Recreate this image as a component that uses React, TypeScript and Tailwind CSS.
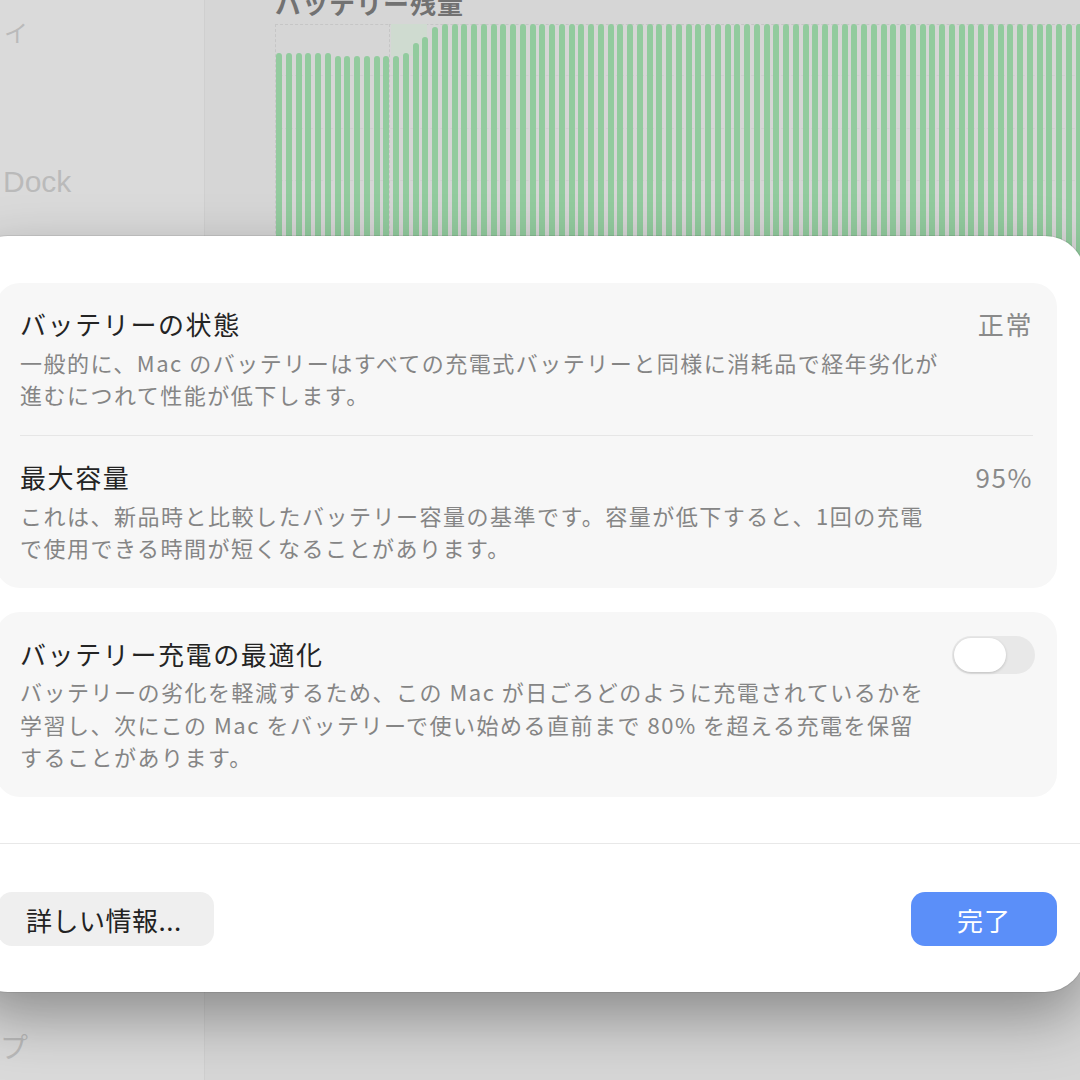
import React from "react";

const bars: number[] = [
  211, 211, 211, 211, 211, 211,
  208, 208, 208, 208, 208, 208, 208,
  211, 221, 227, 237,
  ...Array.from({ length: 66 }, () => 240),
];

const Row = ({
  title,
  value,
  lines,
  last,
}: {
  title: string;
  value: string;
  lines: string[];
  last?: boolean;
}) => {
  return (
    <div
      className={`flex justify-between pt-[25px] pb-[25px] ${
        last ? "" : "border-b border-[#e6e6e6]"
      }`}
    >
      <div>
        <div className="text-[26px] leading-[32px] tracking-[1.6px] text-[#242424]">
          {title}
        </div>
        <div className="mt-[6px] text-[22px] leading-[32px] tracking-[1.5px] text-[#858585]">
          {lines.map((l) => (
            <div key={l} className="whitespace-nowrap">
              {l}
            </div>
          ))}
        </div>
      </div>
      <div className="text-[26px] leading-[32px] tracking-[1.6px] text-[#8a8a8a]">
        {value}
      </div>
    </div>
  );
};

const Toggle = () => {
  return (
    <div className="w-[83px] h-[38px] rounded-full bg-[#e8e8e8] p-[2px] flex">
      <div className="w-[52px] h-[34px] rounded-full bg-white shadow-[0_1px_3px_rgba(0,0,0,0.18)]" />
    </div>
  );
};

const Chart = () => {
  return (
    <div className="relative h-[240px] w-[820px]">
      {/* grid */}
      <div className="absolute left-0 top-0 right-0 border-t border-dashed border-[#c6c6c6]" />
      <div className="absolute left-0 top-[51px] right-0 border-t border-dashed border-[#cfcfcf]" />
      <div className="absolute left-0 top-[104px] right-0 border-t border-dashed border-[#cfcfcf]" />
      <div className="absolute left-0 top-[156px] right-0 border-t border-dashed border-[#cfcfcf]" />
      <div className="absolute left-0 top-0 bottom-0 border-l border-dashed border-[#c6c6c6]" />
      <div className="absolute left-[114px] top-0 bottom-0 border-l border-dashed border-[#c6c6c6]" />
      <div className="absolute left-[342px] top-0 bottom-0 border-l border-dashed border-[#cdcdcd]" />
      <div className="absolute left-[567px] top-0 bottom-0 border-l border-dashed border-[#cdcdcd]" />
      <div className="absolute left-[116px] top-0 w-[36px] h-[32px] bg-[#cfdbd0]" />
      <div className="relative flex items-end h-full gap-[3.75px] pl-[1px]">
        {bars.map((h, i) => (
          <div
            key={i}
            className="w-[6px] shrink-0 rounded-t-[3px] bg-[#92cb9e]"
            style={{ height: h }}
          />
        ))}
      </div>
    </div>
  );
};

export default function App() {
  return (
    <div className="relative w-[1080px] h-[1080px] overflow-hidden bg-[#d6d6d6] font-['Noto_Sans_CJK_JP','Noto_Sans',sans-serif]">
      {/* background window */}
      <div className="flex h-full">
        <div className="w-[205px] shrink-0 bg-[#dadada] border-r border-[#cfcfcf] flex flex-col text-[#bababa]">
          <div className="pl-[4px] pt-[16px] text-[24px] leading-[32px]">イ</div>
          <div className="pl-[3px] mt-[116px] text-[30px] leading-[36px] font-['Liberation_Sans',sans-serif]">
            Dock
          </div>
          <div className="mt-auto pl-[0px] pb-[16px] text-[28px] leading-[36px]">プ</div>
        </div>
        <div className="flex-1 pl-[70px] overflow-hidden flex flex-col">
          <div className="h-[24px] flex flex-col justify-end">
            <div className="text-[26px] leading-[30px] font-semibold tracking-[1px] text-[#727272] mb-[6px]">
              バッテリー残量
            </div>
          </div>
          <Chart />
        </div>
      </div>

      {/* sheet */}
      <div className="absolute left-[-32px] top-[236px] w-[1117px] h-[756px] rounded-[40px] bg-white shadow-[0_0_0_1px_rgba(0,0,0,0.08),0_24px_60px_rgba(0,0,0,0.36)] flex flex-col">
        <div className="px-[28px] pt-[47px] flex flex-col gap-[24px]">
          <div className="rounded-[24px] bg-[#f7f7f7] px-[24px]">
            <Row
              title="バッテリーの状態"
              value="正常"
              lines={[
                "一般的に、Mac のバッテリーはすべての充電式バッテリーと同様に消耗品で経年劣化が",
                "進むにつれて性能が低下します。",
              ]}
            />
            <Row
              title="最大容量"
              value="95%"
              last
              lines={[
                "これは、新品時と比較したバッテリー容量の基準です。容量が低下すると、1回の充電",
                "で使用できる時間が短くなることがあります。",
              ]}
            />
          </div>
          <div className="rounded-[24px] bg-[#f7f7f7] px-[24px] pt-[26px] pb-[24px] flex justify-between">
            <div>
              <div className="text-[26px] leading-[32px] tracking-[1.6px] text-[#242424]">
                バッテリー充電の最適化
              </div>
              <div className="mt-[5px] text-[22px] leading-[32.5px] tracking-[1.5px] text-[#858585]">
                <div className="whitespace-nowrap">
                  バッテリーの劣化を軽減するため、この Mac が日ごろどのように充電されているかを
                </div>
                <div className="whitespace-nowrap">
                  学習し、次にこの Mac をバッテリーで使い始める直前まで 80% を超える充電を保留
                </div>
                <div className="whitespace-nowrap">することがあります。</div>
              </div>
            </div>
            <div className="-mt-[2px] -mr-[2px]">
              <Toggle />
            </div>
          </div>
        </div>

        <div className="mt-auto border-t border-[#e8e8e8] pt-[48px] pb-[46px] pl-[30px] pr-[28px] flex justify-between">
          <button className="h-[54px] w-[216px] rounded-[14px] bg-[#efefef] pl-[28px] text-left text-[26px] tracking-[0.5px] text-[#222222]">
            詳しい情報...
          </button>
          <button className="h-[54px] w-[146px] rounded-[14px] bg-[#5b8ff9] text-[26px] tracking-[1px] text-white">
            完了
          </button>
        </div>
      </div>
    </div>
  );
}
